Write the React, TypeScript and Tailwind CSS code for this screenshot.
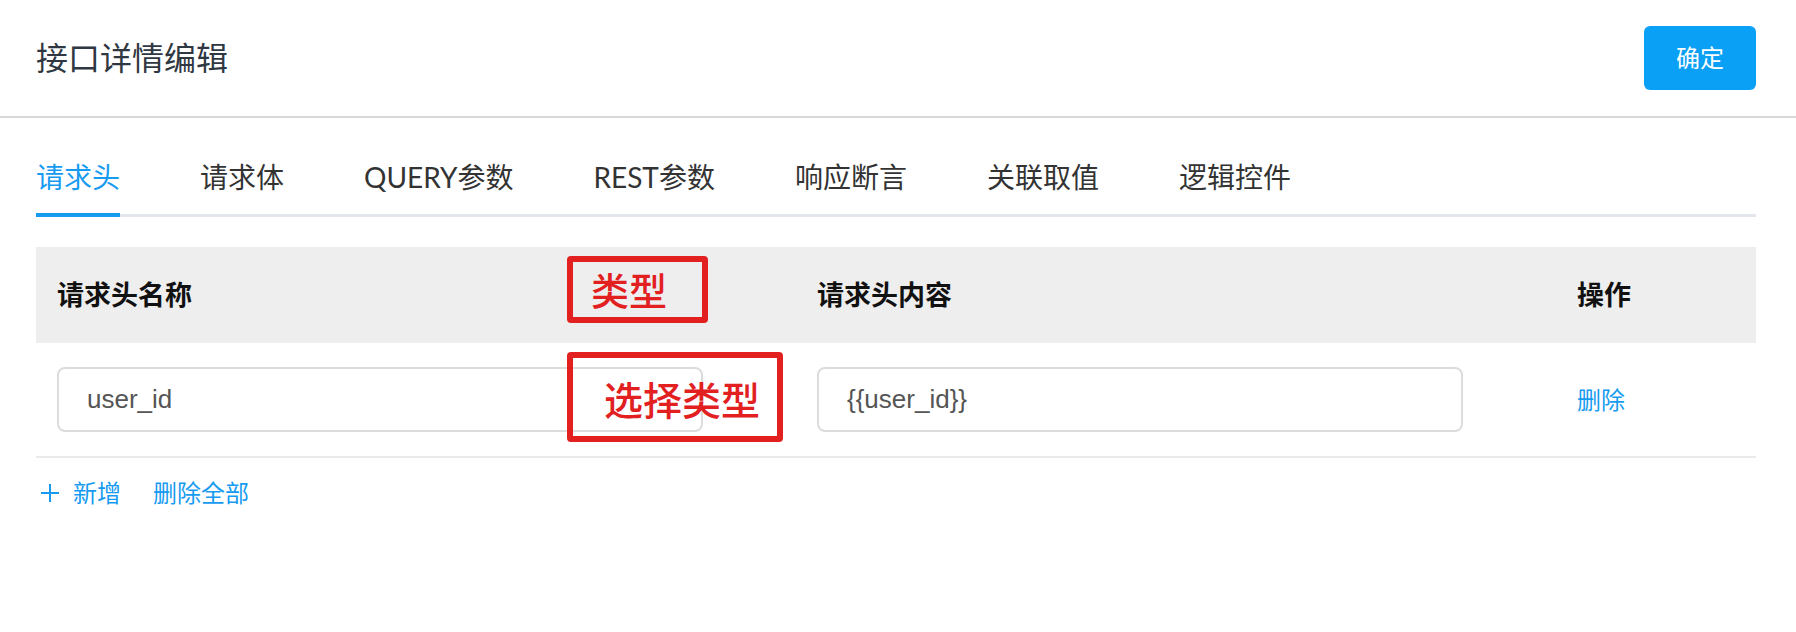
import React from "react";

const tabs = ["请求头", "请求体", "QUERY参数", "REST参数", "响应断言", "关联取值", "逻辑控件"];

function PlusIcon() {
  return (
    <svg width="20" height="20" viewBox="0 0 20 20" className="shrink-0">
      <path d="M10 1v18M1 10h18" stroke="currentColor" strokeWidth="2" fill="none" />
    </svg>
  );
}

export default function App() {
  const activeTab = 0;

  return (
    <div className="relative h-[632px] w-full overflow-hidden bg-white font-['Lato','Noto_Sans_CJK_SC',sans-serif]">
      <header className="flex h-[118px] items-center justify-between border-b-2 border-[#d9d9d9] pl-[36px] pr-[40px]">
        <h1 className="text-[32px] font-normal leading-[40px] text-[#2f3842]">接口详情编辑</h1>
        <button
          type="button"
          className="h-[64px] w-[112px] rounded-[6px] bg-[#0aa0f5] text-[24px] leading-none text-white"
        >
          确定
        </button>
      </header>

      <div className="pl-[36px] pr-[40px]">
        <nav className="flex gap-[80px] border-b-[3px] border-[#e4e6ee] pt-[39px]">
          {tabs.map((tab, index) => (
            <div
              key={tab}
              className={`relative pb-[17px] text-[28px] leading-[40px] ${
                index === activeTab ? "text-[#169bf0]" : "text-[#333333]"
              }`}
            >
              {tab}
              {index === activeTab ? (
                <span className="absolute bottom-[-3px] left-0 h-[4px] w-full bg-[#169bf0]" />
              ) : null}
            </div>
          ))}
        </nav>

        <div className="mt-[30px]">
          <div className="grid h-[96px] grid-cols-[760px_760px_1fr] items-center bg-[#eeeeee] text-[27px] font-bold text-[#111111]">
            <div className="pl-[21px]">请求头名称</div>
            <div className="pl-[21px]">请求头内容</div>
            <div className="pl-[21px]">操作</div>
          </div>

          <div className="grid h-[115px] grid-cols-[760px_760px_1fr] items-center border-b-2 border-[#ebebeb]">
            <div className="pl-[21px]">
              <div className="flex h-[65px] w-[646px] items-center rounded-[8px] border-2 border-[#dcdcdc] px-[28px] font-['Liberation_Sans',sans-serif] text-[26px] text-[#555555]">
                user_id
              </div>
            </div>
            <div className="pl-[21px]">
              <div className="flex h-[65px] w-[646px] items-center rounded-[8px] border-2 border-[#dcdcdc] px-[28px] font-['Liberation_Sans',sans-serif] text-[26px] text-[#555555]">
                {"{{user_id}}"}
              </div>
            </div>
            <div className="pl-[21px] text-[24px] text-[#169bf0]">删除</div>
          </div>
        </div>

        <div className="mt-[19px] flex items-center text-[24px] leading-[32px] text-[#169bf0]">
          <span className="ml-[4px] text-[#169bf0]">
            <PlusIcon />
          </span>
          <span className="ml-[13px]">新增</span>
          <span className="ml-[32px]">删除全部</span>
        </div>
      </div>

      {/* annotation boxes drawn over the screenshot */}
      <div className="absolute left-[567px] top-[256px] flex h-[67px] w-[141px] items-center rounded-[4px] border-[6px] border-[#e2201f] pl-[18px] text-[38px] font-medium leading-none text-[#e2201f]">
        类型
      </div>
      <div className="absolute left-[567px] top-[352px] flex h-[90px] w-[216px] items-center rounded-[4px] border-[6px] border-[#e2201f] pl-[31px] pt-[6px] text-[39px] font-medium leading-none text-[#e2201f]">
        选择类型
      </div>
    </div>
  );
}
